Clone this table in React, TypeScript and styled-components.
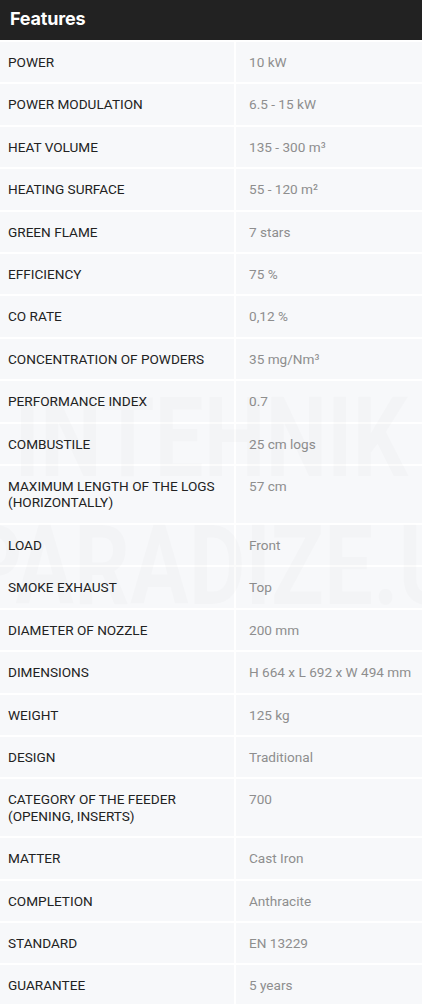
import React from 'react';
import styled, { createGlobalStyle } from 'styled-components';

const GlobalStyle = createGlobalStyle`
  html, body {
    margin: 0;
    padding: 0;
    background: #ffffff;
  }
  * {
    box-sizing: border-box;
  }
`;

const features: [string, string][] = [
  ['POWER', '10 kW'],
  ['POWER MODULATION', '6.5 - 15 kW'],
  ['HEAT VOLUME', '135 - 300 m³'],
  ['HEATING SURFACE', '55 - 120 m²'],
  ['GREEN FLAME', '7 stars'],
  ['EFFICIENCY', '75 %'],
  ['CO RATE', '0,12 %'],
  ['CONCENTRATION OF POWDERS', '35 mg/Nm³'],
  ['PERFORMANCE INDEX', '0.7'],
  ['COMBUSTILE', '25 cm logs'],
  ['MAXIMUM LENGTH OF THE LOGS (HORIZONTALLY)', '57 cm'],
  ['LOAD', 'Front'],
  ['SMOKE EXHAUST', 'Top'],
  ['DIAMETER OF NOZZLE', '200 mm'],
  ['DIMENSIONS', 'H 664 x L 692 x W 494 mm'],
  ['WEIGHT', '125 kg'],
  ['DESIGN', 'Traditional'],
  ['CATEGORY OF THE FEEDER (OPENING, INSERTS)', '700'],
  ['MATTER', 'Cast Iron'],
  ['COMPLETION', 'Anthracite'],
  ['STANDARD', 'EN 13229'],
  ['GUARANTEE', '5 years'],
];

const App = () => {
  return (
    <>
      <GlobalStyle />
      <Panel>
        <Header>Features</Header>
        <Table>
          {features.map(([label, value]) => (
            <React.Fragment key={label}>
              <LabelCell>{label}</LabelCell>
              <ValueCell>{value}</ValueCell>
            </React.Fragment>
          ))}
        </Table>
        <Watermark aria-hidden="true">
          <MarkLine>INTEHNIK</MarkLine>
          <MarkLine>PARADIZE.U</MarkLine>
        </Watermark>
      </Panel>
    </>
  );
};

const Panel = styled.div`
  position: relative;
  width: 422px;
  overflow: hidden;
  font-family: Roboto, 'Liberation Sans', Arial, sans-serif;
`;

const Header = styled.div`
  height: 40px;
  background: #222222;
  color: #ffffff;
  font-family: Inter, 'Liberation Sans', Arial, sans-serif;
  font-weight: 700;
  font-size: 18px;
  line-height: 37px;
  padding-left: 10px;
  letter-spacing: -0.2px;
`;

const Table = styled.div`
  display: grid;
  grid-template-columns: 234px 1fr;
  gap: 2px;
  padding-top: 2px;
`;

const Cell = styled.div`
  background: #f7f8fa;
  font-size: 13.6px;
  line-height: 16.4px;
  padding: 12px 6px 12px 8px;
`;

const LabelCell = styled(Cell)`
  color: #222222;
`;

const ValueCell = styled(Cell)`
  color: #8e8e8e;
  padding-left: 13px;
  padding-right: 2px;
`;

const Watermark = styled.div`
  position: absolute;
  left: 0;
  right: 0;
  top: 380px;
  display: flex;
  flex-direction: column;
  align-items: center;
  gap: 12px;
  pointer-events: none;
`;

const MarkLine = styled.div`
  font-family: Roboto, 'Liberation Sans', Arial, sans-serif;
  font-weight: 700;
  font-size: 112px;
  line-height: 116px;
  color: rgba(0, 0, 0, 0.014);
  white-space: nowrap;
  transform: scaleX(0.78);
`;

export default App;
